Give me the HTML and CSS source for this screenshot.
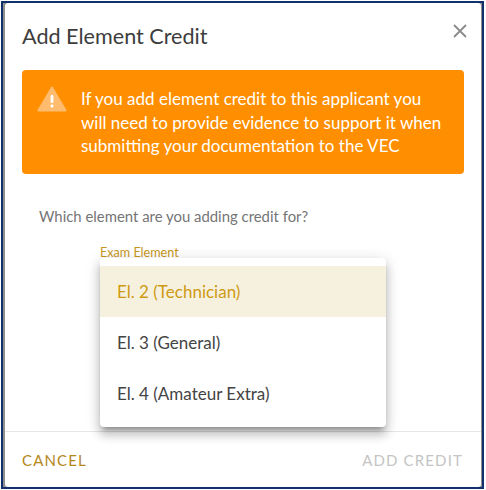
FILE: index.html
```html
<!DOCTYPE html>
<html>
<head lang="en">
<meta charset="UTF-8">
<title>Add Element Credit</title>
<link rel="stylesheet" href="styles.css">
</head>
<body>
<div class="frame">
<div class="dialog">
    <div class="head">
        <h2 class="title">Add Element Credit</h2>
        <svg class="close" width="14" height="14" viewBox="0 0 14 14"><path d="M1 1L13 13M13 1L1 13" stroke="#8a8a8a" stroke-width="1.8" fill="none"/></svg>
    </div>
    <div class="warn">
        <svg class="warn-icon" width="30" height="26" viewBox="0 0 30 26">
            <path d="M15 1.5L28.6 24.5H1.4Z" fill="#ffbb6e" stroke="#ffbb6e" stroke-width="2" stroke-linejoin="round"/>
            <rect x="13.6" y="9" width="2.8" height="8" rx="1" fill="#fff"/>
            <rect x="13.6" y="18.6" width="2.8" height="2.8" rx="1" fill="#fff"/>
        </svg>
        <p class="warn-text">If you add element credit to this applicant you will need to provide evidence to support it when submitting your documentation to the VEC</p>
    </div>
    <p class="question">Which element are you adding credit for?</p>
    <div class="field">
        <label class="field-label">Exam Element</label>
    </div>
    <div class="foot">
        <span class="btn cancel">CANCEL</span>
        <span class="btn add">ADD CREDIT</span>
    </div>
    <ul class="menu">
        <li class="cur">El. 2 (Technician)</li>
        <li>El. 3 (General)</li>
        <li>El. 4 (Amateur Extra)</li>
    </ul>
</div>
</div>
</body>
</html>
```

FILE: styles.css
```css
*{
    margin:0;
    padding:0;
    box-sizing:border-box;
    list-style:none;
}
html,body{
    width:486px;
    height:490px;
    overflow:hidden;
}
body{
    background:#fff;
    padding:1px;
    font-family:Lato,sans-serif;
}
.frame{
    width:483px;
    height:488px;
    padding:0 1px 0 2px;
    background:#8f8f8f;
    border:2px solid #12306e;
}
.dialog{
    position:relative;
    display:flex;
    flex-direction:column;
    width:476px;
    height:484px;
    background:#fff;
    border-radius:3px;
}
.head{
    display:flex;
    justify-content:space-between;
    padding:19px 14px 0 17px;
    height:67px;
}
.title{
    font-size:21.6px;
    font-weight:400;
    line-height:28px;
    color:#3d3d3d;
}
.close{
    margin-top:2px;
}
.warn{
    display:flex;
    align-items:flex-start;
    gap:14px;
    margin:0 17px;
    padding:17px 16px 0 15px;
    height:104px;
    background:#ff8f00;
    border-radius:4px;
}
.warn-icon{
    flex:none;
    margin-top:-1px;
}
.warn-text{
    font-size:17px;
    line-height:23.5px;
    color:#fff;
}
.question{
    margin:31px 0 0 34px;
    font-size:14.9px;
    line-height:22px;
    color:#757575;
}
.field{
    margin:18px 0 0 95px;
    flex:1;
}
.field-label{
    display:block;
    font-size:12.6px;
    line-height:16px;
    color:#c8961e;
}
.foot{
    display:flex;
    justify-content:space-between;
    align-items:center;
    height:56px;
    padding:0 18px 0 17px;
    border-top:1px solid #e6e6e6;
}
.btn{
    font-size:15px;
    letter-spacing:1.15px;
}
.cancel{
    color:#b5871a;
}
.add{
    color:#c4c4c4;
}
.menu{
    position:absolute;
    left:95px;
    top:255px;
    width:286px;
    height:169px;
    padding-top:8px;
    background:#fff;
    border-radius:4px;
    box-shadow:0 5px 5px -3px rgba(0,0,0,.3),0 8px 10px 1px rgba(0,0,0,.16),0 3px 14px 2px rgba(0,0,0,.12);
}
.menu li{
    height:51px;
    padding-left:17px;
    font-size:17px;
    line-height:51px;
    color:#444;
}
.menu .cur{
    background:#f6f1df;
    color:#cf9a12;
}
```
